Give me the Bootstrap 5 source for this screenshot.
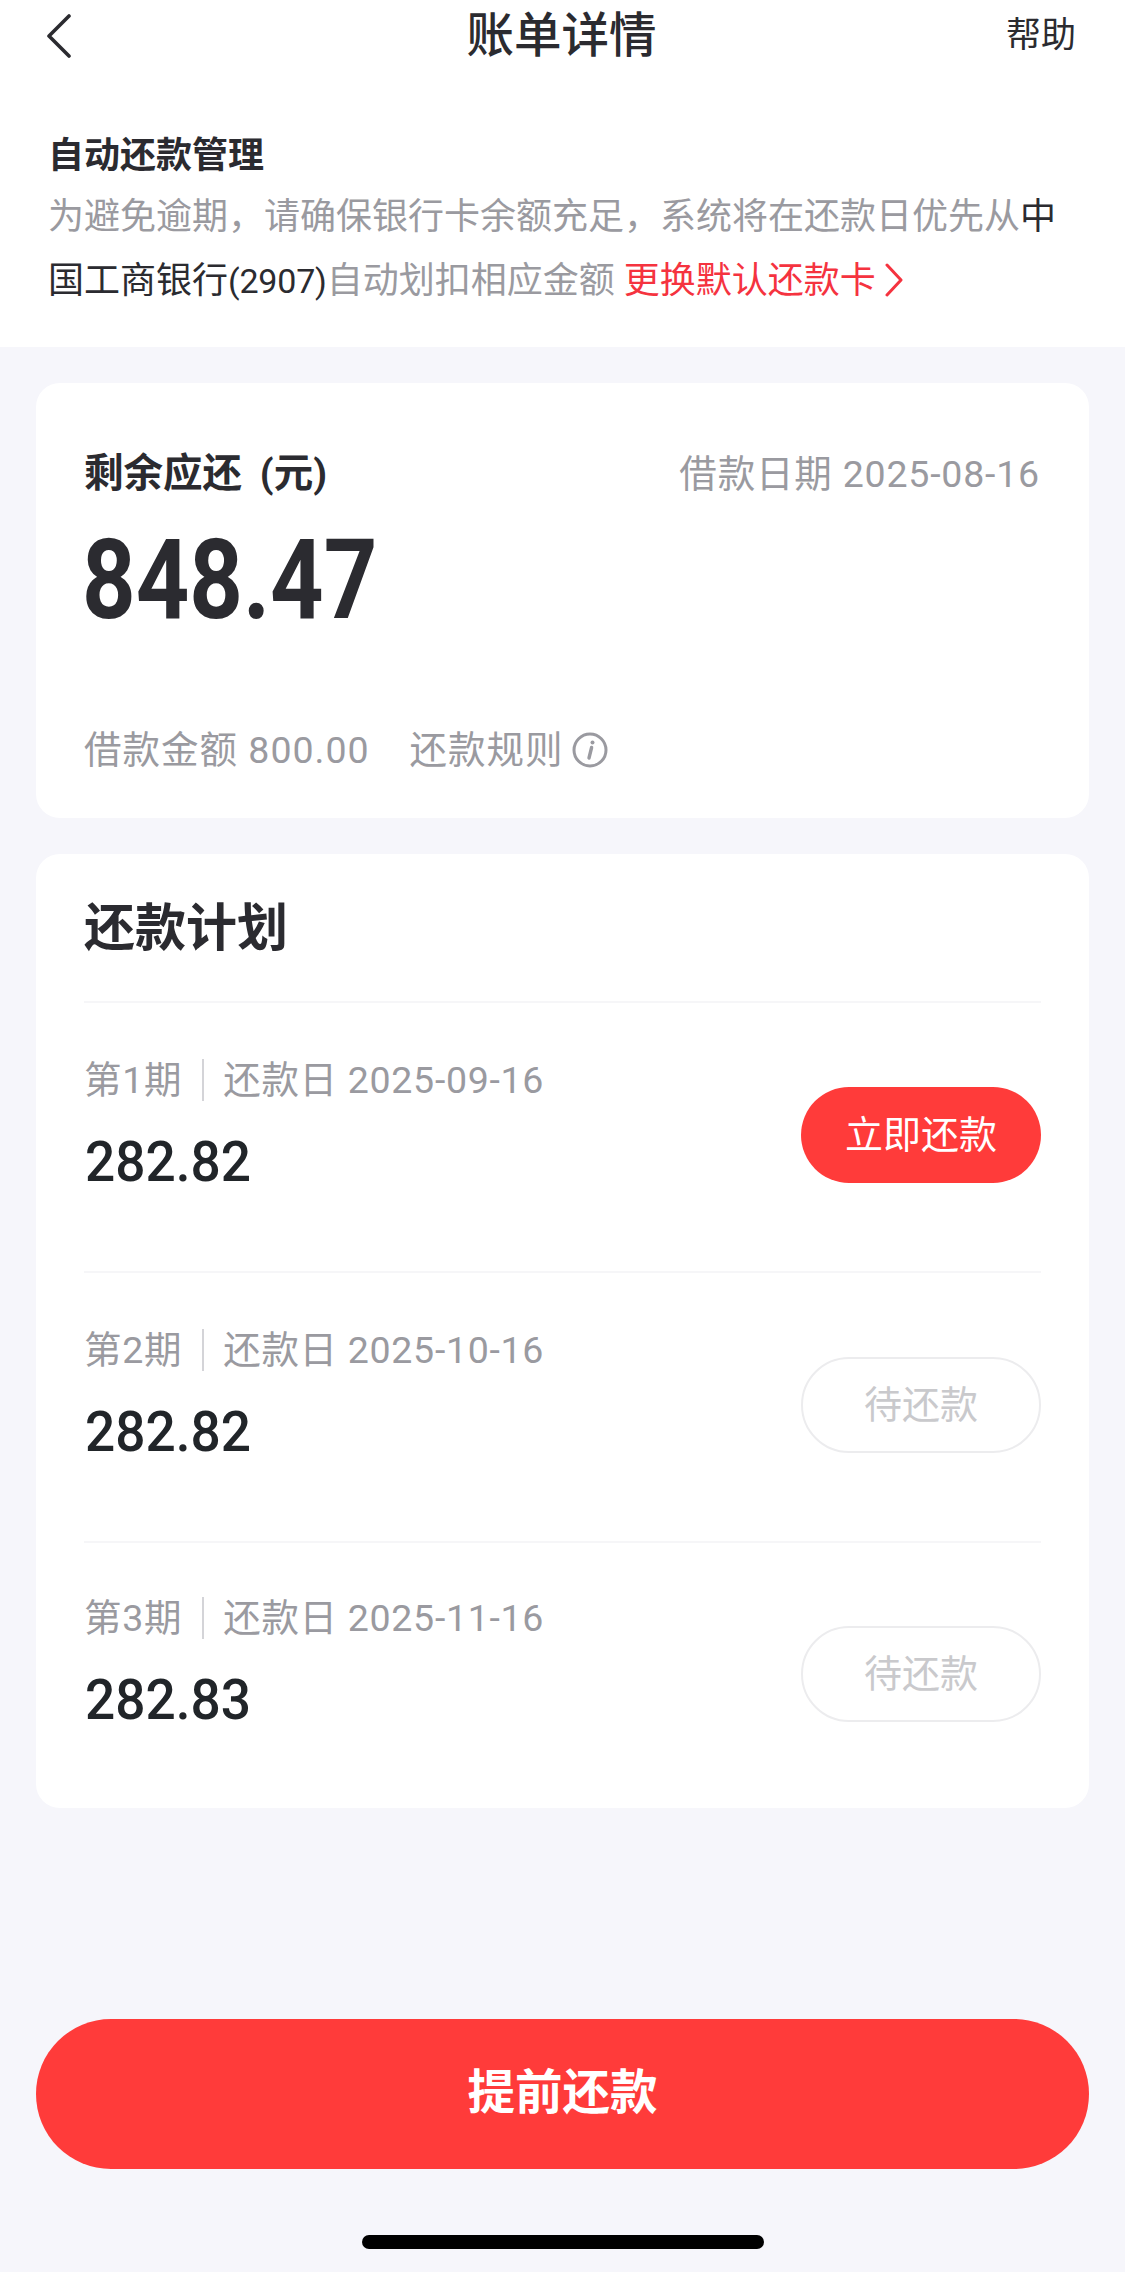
<!DOCTYPE html>
<html lang="zh-CN">
<head>
<meta charset="utf-8">
<title>账单详情</title>
<link href="https://cdn.jsdelivr.net/npm/bootstrap@5.3.0/dist/css/bootstrap.min.css" rel="stylesheet">
<style>
:root{--ink:#2b2b30;--mute:#9a9aa0;--hot:#ff3b3a;--page:#f6f6fb;}
html,body{margin:0;height:100%;}
body{background:var(--page);color:var(--ink);font-family:"Roboto","Noto Sans CJK SC",sans-serif;}
.app-shell{min-height:2272px;}
.top-panel{background:#fff;height:347px;}
.top-nav{display:grid;grid-template-columns:1fr auto 1fr;align-items:center;height:72px;padding:0 49px 0 47px;margin-bottom:49px;}
.top-title{font-size:47.5px;font-weight:500;line-height:72px;}
.top-help{font-size:35px;line-height:72px;text-align:right;}
.auto-box{padding:0 48px;font-size:36px;line-height:64px;color:var(--mute);}
.auto-head{font-size:36px;font-weight:700;color:var(--ink);height:64px;line-height:70px;}
.auto-dark{color:var(--ink);}
.auto-num{font-size:34px;letter-spacing:-.2px;}
.auto-link{color:#f5333f;}
.auto-link svg{vertical-align:-4px;margin-left:8px;}
.sheet{background:#fff;border:0;border-radius:24px;margin:36px 36px 0 36px;}
.sum-card{padding:61px 49px 38px 48px;}
.sum-label{font-size:39.5px;font-weight:700;line-height:60px;word-spacing:8px;}
.sum-date,.sum-foot{font-size:37.5px;line-height:60px;color:var(--mute);}
.sum-date{letter-spacing:.8px;}
.sum-big{font-family:"Roboto",sans-serif;font-size:112px;font-weight:700;line-height:120px;margin:16px 0 0 -2px;transform:scaleX(.835);transform-origin:left center;}
.sum-foot{margin-top:80px;letter-spacing:1px;}
.rule-text{margin-left:40px;}
.plan-card{padding:35px 48px 0 48px;}
.plan-title{font-size:51px;font-weight:700;line-height:80px;margin-bottom:32px;}
.list-group-flush>.plan-row{height:270px;border-width:2px 0 0;border-style:solid;border-color:#f6f6f8;padding:0;background:transparent;}
.list-group-flush>.plan-row:last-child{height:267px;}
.plan-meta{font-size:37.5px;line-height:42px;color:var(--mute);margin-top:-24px;letter-spacing:.7px;}
.plan-sep{display:inline-block;width:2px;height:42px;background:#d4d4d8;margin:0 19px 0 20px;vertical-align:-8px;}
.plan-amt{font-family:"Roboto",sans-serif;font-size:56px;font-weight:500;line-height:60px;margin:31px 0 0 1px;transform:scaleX(.95);transform-origin:left center;}
.pay-pill{width:240px;height:96px;font-size:38px;line-height:1;padding:0;margin-top:-4px;display:flex;align-items:center;justify-content:center;}
.pay-now{background:var(--hot);border:0;color:#fff;}
.pay-wait{background:#fff;border:2px solid #ececee;color:#c9c9cc;}
.big-action{width:calc(100% - 72px);height:150px;background:var(--hot);border:0;color:#fff;font-size:47.5px;font-weight:700;margin:0 36px;display:flex;align-items:center;justify-content:center;}
.home-bar{width:402px;height:14px;border-radius:7px;background:#000;margin:66px auto 23px;}
</style>
</head>
<body>
<div class="app-shell d-flex flex-column">
  <header class="top-panel">
    <nav class="top-nav">
      <svg width="24" height="44" viewBox="0 0 24 44" fill="none" stroke="#2b2b30" stroke-width="3.6" stroke-linecap="round" stroke-linejoin="round" aria-label="返回"><path d="M22 2 2 22l20 20"/></svg>
      <div class="top-title">账单详情</div>
      <div class="top-help">帮助</div>
    </nav>
    <div class="auto-box">
      <div class="auto-head">自动还款管理</div>
      <div>为避免逾期，请确保银行卡余额充足，系统将在还款日优先从<span class="auto-dark">中国工商银行<span class="auto-num">(2907)</span></span>自动划扣相应金额 <span class="auto-link">更换默认还款卡<svg width="20" height="34" viewBox="0 0 20 34" fill="none" stroke="#f5333f" stroke-width="3" stroke-linecap="round" stroke-linejoin="round"><path d="M3 2l14 15L3 32"/></svg></span></div>
    </div>
  </header>

  <section class="card sheet sum-card">
    <div class="d-flex justify-content-between">
      <div class="sum-label">剩余应还 (元)</div>
      <div class="sum-date">借款日期 2025-08-16</div>
    </div>
    <div class="sum-big">848.47</div>
    <div class="sum-foot d-flex align-items-center">
      <span>借款金额 800.00</span>
      <span class="rule-text">还款规则</span>
      <svg class="ms-2" width="36" height="36" viewBox="0 0 36 36" fill="none" stroke="#9a9aa0"><circle cx="18" cy="18" r="16" stroke-width="3"/><path d="M19.6 15.5 17 26" stroke-width="3.4" stroke-linecap="round"/><circle cx="20.5" cy="10.5" r="2" fill="#9a9aa0" stroke="none"/></svg>
    </div>
  </section>

  <section class="card sheet plan-card">
    <div class="plan-title">还款计划</div>
    <div class="list-group list-group-flush">
      <div class="list-group-item plan-row d-flex justify-content-between align-items-center">
        <div><div class="plan-meta">第1期<span class="plan-sep"></span>还款日 2025-09-16</div><div class="plan-amt">282.82</div></div>
        <button class="btn rounded-pill pay-pill pay-now" type="button">立即还款</button>
      </div>
      <div class="list-group-item plan-row d-flex justify-content-between align-items-center">
        <div><div class="plan-meta">第2期<span class="plan-sep"></span>还款日 2025-10-16</div><div class="plan-amt">282.82</div></div>
        <button class="btn rounded-pill pay-pill pay-wait" type="button">待还款</button>
      </div>
      <div class="list-group-item plan-row d-flex justify-content-between align-items-center">
        <div><div class="plan-meta">第3期<span class="plan-sep"></span>还款日 2025-11-16</div><div class="plan-amt">282.83</div></div>
        <button class="btn rounded-pill pay-pill pay-wait" type="button">待还款</button>
      </div>
    </div>
  </section>

  <div class="mt-auto">
    <button class="btn rounded-pill big-action" type="button">提前还款</button>
    <div class="home-bar"></div>
  </div>
</div>
<script src="https://cdn.jsdelivr.net/npm/bootstrap@5.3.0/dist/js/bootstrap.bundle.min.js"></script>
</body>
</html>
